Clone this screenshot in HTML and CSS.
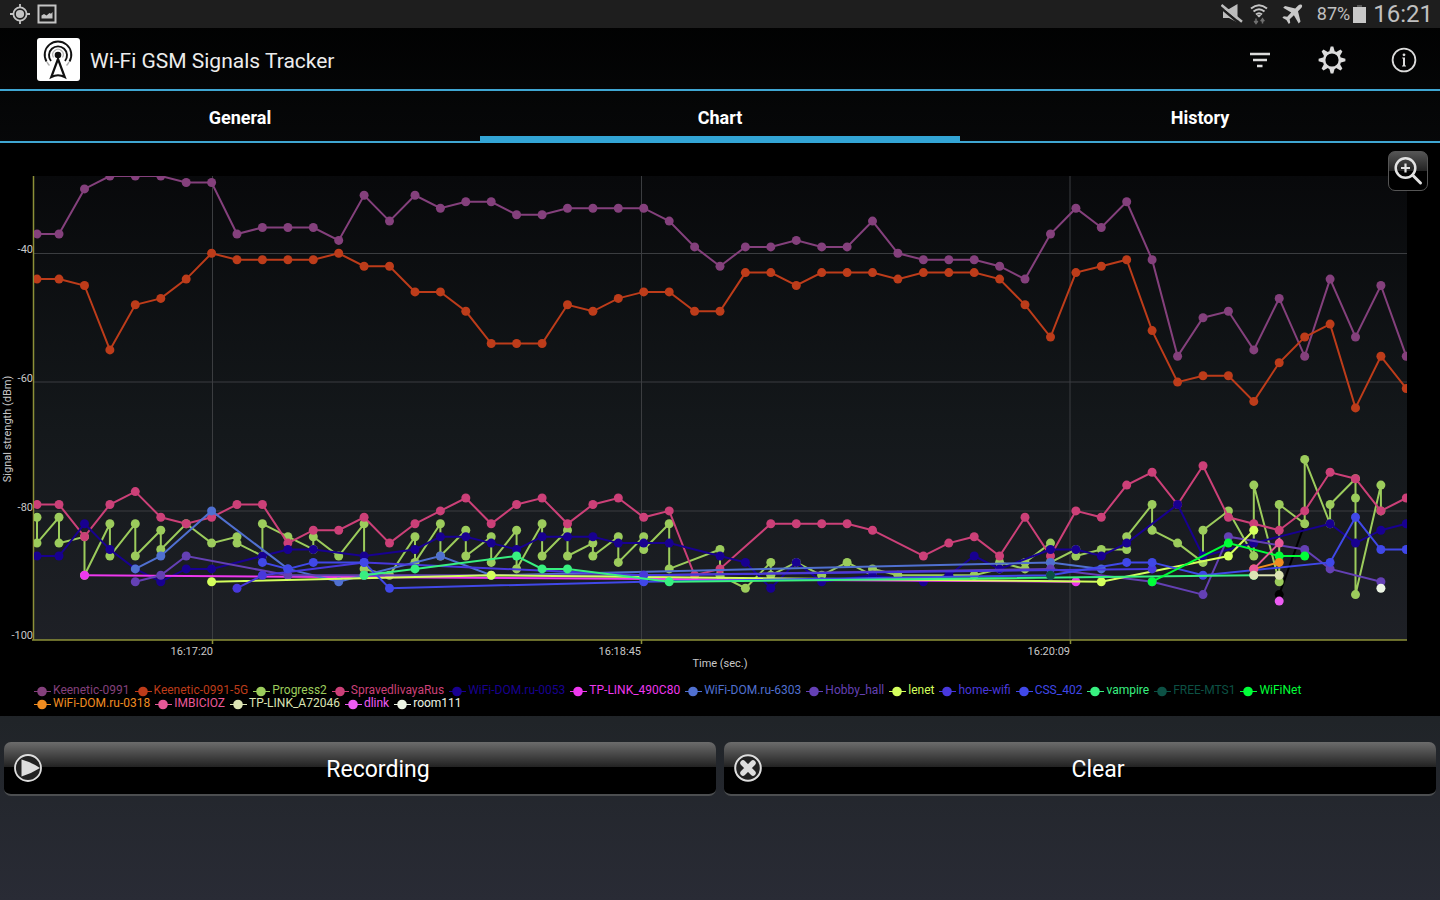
FILE: index.html
```html
<!DOCTYPE html>
<html lang="en">
<head>
<meta charset="utf-8">
<meta name="viewport" content="width=device-width, initial-scale=1">
<title>Wi-Fi GSM Signals Tracker</title>
<link rel="stylesheet" href="styles.css">
</head>
<body>
<div class="status">
  <div class="status-group">
    <svg class="ic" width="20" height="20" viewBox="0 0 20 20" fill="none" stroke="#c4c4c4" stroke-width="1.8"><circle cx="10" cy="10" r="6.6"/><circle cx="10" cy="10" r="3.2" fill="#c4c4c4"/><path d="M10 0v4M10 16v4M0 10h4M16 10h4"/></svg>
    <svg class="ic" width="20" height="20" viewBox="0 0 20 20"><path d="M1.500 1.500h17v17h-17z" fill="none" stroke="#c4c4c4" stroke-width="2"/><path d="M4.500 14.500v-3l2.500-1.500 2.500 1.500 3-2.500 1.500.8 1.500-1.800v6.500z" fill="#c4c4c4"/></svg>
  </div>
  <div class="status-group status-right">
    <svg class="ic mute" width="22" height="20" viewBox="0 0 22 20"><path d="M2 5h6l8.500-5v18.500L8 14H2z" fill="#bdbdbd"/><path d="M-1 3 20 20.500" stroke="#1e1e1e" stroke-width="2.600"/><path d="M.5 1 21 17.800" stroke="#bdbdbd" stroke-width="2.400"/></svg>
    <svg class="ic wifi" width="18" height="21" viewBox="0 0 18 21"><g fill="none" stroke="#c4c4c4" stroke-width="2"><path d="M1 4.500q8-6.500 16 0M3.500 7.600q5.500-4.600 11 0M6 10.500q3-2.500 6 0"/></g><path d="M9 13.500 6.800 11.600q2.200-1.600 4.400 0z" fill="#c4c4c4"/><path d="M6 14.500v4.500M4.200 17 6 19.400 7.800 17M12.500 19.500V15M10.700 17.200l1.800-2.400 1.800 2.400" fill="none" stroke="#707070" stroke-width="1.500"/></svg>
    <svg class="ic plane" width="21" height="21" viewBox="0 0 21 21"><path d="M19.800 1c-1-1-2.600-.4-3.600.6l-3 3L3 2 1.200 3.800l8 4.800-4 4.200-3.400-.5L.4 13.700l4 2.400 2.400 4 1.400-1.400-.5-3.500 4.200-4 4.800 8.200 1.800-1.800-2.500-10.400 3-3c1-1 1.600-2.400.8-3.200z" fill="#c8c8c8"/></svg>
    <span class="percent">87%</span>
    <svg class="ic" width="13" height="18" viewBox="0 0 13 18"><path d="M4 0h5v2h4v16H0V2h4z" fill="#c8c8c8"/><path d="M4 0h5v2H4z" fill="#555"/></svg>
    <time class="clock">16:21</time>
  </div>
</div>

<header class="appbar">
  <svg class="logo" width="43" height="43" viewBox="0 0 43 43"><rect width="43" height="43" rx="3" fill="#fff"/><g fill="none" stroke="#111"><circle cx="21" cy="17" r="3.300" fill="#111" stroke="none"/><path stroke-width="1.500" d="M12.500 27.500A13 13 0 0 1 10 24M29.500 27.500A13 13 0 0 0 32 24" opacity=".35"/><path stroke-width="1.900" d="M9.500 23.500A13.300 13.300 0 1 1 32.500 23.500"/><path stroke-width="1.900" d="M14 23A9 9 0 1 1 28 23"/><path stroke-width="1.300" d="M16.500 19.500A5.300 5.300 0 1 1 25.500 19.500" opacity=".3"/><path stroke-width="2.200" d="M21 21 14.300 39q6.700-3.500 13.400 0z"/></g></svg>
  <h1 class="title">Wi-Fi GSM Signals Tracker</h1>
  <div class="actions">
    <button class="action" type="button" aria-label="Filter"><svg width="22" height="16" viewBox="0 0 22 16"><path d="M1 2h20M4 8h14M8 14h5.500" stroke="#dcdcdc" stroke-width="2.500"/></svg></button>
    <button class="action" type="button" aria-label="Settings"><svg width="28" height="28" viewBox="-14 -14 28 28"><circle r="7.900" fill="none" stroke="#dcdcdc" stroke-width="2.600"/><g fill="#dcdcdc"><path id="tooth" d="M-2.800-8.200-1.300-13.400h2.600L2.800-8.200z"/><use href="#tooth" transform="rotate(45)"/><use href="#tooth" transform="rotate(90)"/><use href="#tooth" transform="rotate(135)"/><use href="#tooth" transform="rotate(180)"/><use href="#tooth" transform="rotate(225)"/><use href="#tooth" transform="rotate(270)"/><use href="#tooth" transform="rotate(315)"/></g></svg></button>
    <button class="action" type="button" aria-label="Information"><svg width="26" height="26" viewBox="0 0 26 26"><circle cx="13" cy="13" r="11.400" fill="none" stroke="#dcdcdc" stroke-width="1.800"/><path d="M11.200 10.500H14v8h1v1h-4v-1h1v-7h-.8z" fill="#dcdcdc"/><circle cx="13" cy="7.800" r="1.400" fill="#dcdcdc"/></svg></button>
  </div>
</header>

<nav class="tabs">
  <button class="tab" type="button">General</button>
  <button class="tab tab-active" type="button" aria-current="page">Chart</button>
  <button class="tab" type="button">History</button>
</nav>

<main>
  <section class="chart-panel">
    <svg class="chart" id="chart" viewBox="0 143 1440 541" role="img" aria-label="Signal strength over time"></svg>
    <ul class="legend" id="legend"></ul>
    <button class="zoom" type="button" aria-label="Zoom in"><svg width="30" height="30" viewBox="0 0 30 30" fill="none" stroke="#e2e2e2"><circle cx="12.500" cy="12" r="9.800" stroke-width="2.500"/><path d="M12.500 7.500v9M8 12h9" stroke-width="2.200"/><path d="m19.500 19 8 8" stroke-width="3" stroke-linecap="round"/></svg></button>
  </section>
  <div class="buttons">
    <button class="glossy" type="button"><svg class="glossy-icon" width="28" height="28" viewBox="0 0 28 28"><circle cx="14" cy="14" r="13" fill="#222" stroke="#dedede" stroke-width="1.800"/><path d="M7.500 5.500v17q10-3 18.500-8.500Q18 8.500 7.500 5.500z" fill="#dedede"/></svg>Recording</button>
    <button class="glossy" type="button"><svg class="glossy-icon" width="28" height="28" viewBox="0 0 28 28"><circle cx="14" cy="14" r="12.800" fill="#222" stroke="#dedede" stroke-width="2"/><path d="m9 9 10 10M19 9 9 19" stroke="#dedede" stroke-width="5.500" stroke-linecap="round"/></svg>Clear</button>
  </div>
</main>
<script src="chart.js"></script>
</body>
</html>
```

FILE: styles.css
```css
* { box-sizing: border-box; }

body {
  margin: 0;
  min-height: 100vh;
  background: linear-gradient(#000, #14181b 48%, #202428 80%, #292b35);
  color: #fff;
  font-family: Roboto, sans-serif;
}

button {
  margin: 0;
  padding: 0;
  border: 0;
  background: none;
  color: inherit;
  font: inherit;
}

svg { display: block; }

.status {
  display: flex;
  justify-content: space-between;
  align-items: center;
  height: 28px;
  padding: 0 7px 0 10px;
  background: #1e1e1e;
  color: #c0c0c0;
}

.status-group {
  display: flex;
  align-items: center;
  gap: 7px;
}

.status-right { gap: 0; }
.ic { flex: none; overflow: hidden; }
.mute { margin-right: 7px; }
.wifi { margin-right: 14px; }
.plane { margin-right: 14px; }
.percent { margin-right: 3px; font-size: 18px; line-height: 28px; }
.clock { margin-left: 7px; font-size: 24px; line-height: 28px; }

.appbar {
  display: flex;
  align-items: center;
  height: 63px;
  padding: 2px 0 0 37px;
  border-bottom: 2px solid #3fa6d2;
}

.title {
  flex: 1;
  margin: 0 0 0 10px;
  padding-top: 2px;
  color: #ececec;
  font-size: 21px;
  font-weight: 400;
  line-height: 28px;
}

.actions { display: flex; }

.action {
  display: grid;
  place-items: center;
  width: 72px;
  height: 60px;
}

.tabs {
  display: grid;
  grid-template-columns: repeat(3, 1fr);
}

.tab {
  height: 52px;
  padding-top: 2px;
  border-bottom: 2px solid #3fa6d2;
  font-size: 18px;
  font-weight: 700;
}

.tab-active {
  padding-top: 7px;
  border-bottom: 7px solid #33a5d6;
}

.chart-panel {
  position: relative;
  padding-bottom: 6px;
  background: #000;
}

.chart {
  width: 100%;
  height: auto;
}

.axis-text { fill: #c8c8c8; font-size: 11px; }

.legend {
  display: flex;
  flex-wrap: wrap;
  column-gap: 5px;
  margin: 0;
  padding: 0 34px;
  list-style: none;
  font-size: 12px;
  line-height: 13px;
}

.legend li { display: flex; align-items: center; gap: 2px; }

.zoom {
  position: absolute;
  top: 8px;
  right: 12px;
  display: grid;
  place-items: center;
  width: 40px;
  height: 40px;
  border: 1px solid #555;
  border-radius: 7px;
  background: linear-gradient(#555, #222 50%, #000 50%);
}

.buttons {
  display: grid;
  grid-template-columns: 1fr 1fr;
  gap: 8px;
  padding: 26px 4px;
}

.glossy {
  position: relative;
  height: 54px;
  padding: 2px 0 0 36px;
  border-bottom: 2px solid #4c4e50;
  border-radius: 7px;
  background: linear-gradient(#6c6c6c, #222 48%, #000 48%);
  font-size: 23px;
}

.glossy-icon {
  position: absolute;
  left: 10px;
  top: 12px;
}
```

FILE: chart.js
```javascript
// Each point is [sample index, signal strength below zero in dBm].
const seq = (values) => values.map((v, i) => [i, v]);

const series = [
  { name: 'Keenetic-0991', color: '#84407c', points: seq([37,37,30,28,28,28,29,29,37,36,36,36,38,31,35,31,33,32,32,34,34,33,33,33,33,35,39,42,39,39,38,39,39,35,40,41,41,41,42,44,37,33,36,32,41,56,50,49,55,47,56,44,53,45,56]) },
  { name: 'Keenetic-0991-5G', color: '#bd3c1a', points: seq([44,44,45,55,48,47,44,40,41,41,41,41,40,42,42,46,46,49,54,54,54,48,49,47,46,46,49,49,43,43,45,43,43,43,44,43,43,43,44,48,53,43,42,41,52,60,59,59,63,57,53,51,64,56,61]) },
  { color: '#000000', hidden: true, points: [[49,93],[50,82]] },
  { name: 'Progress2', color: '#9ccc5c', points: [[0,81],[0,85],[1,81],[1,85],[2,84],[2,90],[3,82],[3,87],[4,82],[4,87],[5,83],[5,86],[6,82],[7,85],[8,84],[8,85],[9,87],[9,82],[10,84],[11,86],[11,84],[12,87],[13,82],[13,89],[14,90],[15,84],[15,88],[16,82],[16,87],[17,83],[17,87],[18,84],[18,88],[19,83],[19,89],[20,82],[20,87],[21,83],[21,87],[22,85],[22,87],[23,84],[23,88],[24,84],[24,86],[25,82],[25,89],[27,86],[27,90],[28,92],[29,88],[29,90],[30,88],[31,90],[32,88],[33,90],[33,89],[34,90],[37,90],[38,89],[38,88],[39,89],[39,88],[40,85],[40,88],[41,86],[41,87],[42,86],[43,86],[43,84],[44,79],[44,83],[45,85],[46,88],[46,83],[47,80],[48,87],[48,76],[49,91],[49,79],[50,82],[50,72],[51,82],[51,79],[52,75],[52,78],[52,93],[53,76],[53,80]] },
  { name: 'SpravedlivayaRus', color: '#cc4078', points: [[0,79],[1,79],[2,84],[3,79],[4,77],[5,81],[6,82],[7,81],[8,79],[9,79],[10,85],[11,83],[12,83],[13,81],[14,85],[15,82],[16,80],[17,78],[18,82],[19,79],[20,78],[21,82],[22,79],[23,78],[24,81],[25,80],[26,90],[27,89],[29,82],[30,82],[31,82],[32,82],[33,83],[35,87],[36,85],[37,84],[38,87],[39,81],[40,87],[41,80],[42,81],[43,76],[44,74],[45,79],[46,73],[47,81],[48,82],[49,83],[50,80],[51,74],[52,75],[53,80],[54,78]] },
  { name: 'WiFi-DOM.ru-0053', color: '#180090', points: [[0,87],[1,87],[2,82],[3,86],[4,89],[5,91],[6,89],[7,89],[9,87],[10,86],[11,86],[13,87],[15,86],[16,84],[17,84],[18,85],[19,86],[20,84],[21,84],[22,84],[23,85],[24,85],[25,85],[27,87],[28,88],[29,92],[30,88],[31,91],[33,90],[35,91],[36,90],[37,87],[38,89],[40,86],[41,86],[42,87],[43,85],[45,79],[46,87],[48,85],[51,82],[52,85],[53,83],[54,82]] },
  { name: 'TP-LINK_490C80', color: '#ee38ee', points: [[2,90],[41,91]] },
  { name: 'WiFi-DOM.ru-6303', color: '#5070d0', points: [[4,89],[5,87],[7,80],[10,89],[12,91],[13,90],[16,87],[18,90],[40,88],[42,89]] },
  { name: 'Hobby_hall', color: '#6440b4', points: [[4,91],[5,90],[6,87],[10,90],[24,90],[40,89],[44,91],[46,93],[47,84],[50,86],[51,89],[53,91]] },
  { name: 'lenet', color: '#d4ff5c', points: [[7,91],[18,90],[42,91],[47,87],[48,83]] },
  { name: 'home-wifi', color: '#4838dc', points: [[8,92],[9,90],[13,88],[24,90],[44,89]] },
  { name: 'CSS_402', color: '#4048e8', points: [[9,88],[10,89],[11,88],[13,88],[14,92],[24,91],[40,90],[43,88],[44,88],[46,90],[51,88],[52,81],[53,86],[54,86]] },
  { name: 'vampire', color: '#38f080', points: [[13,90],[15,89],[19,87],[20,89],[21,89],[25,91],[48,90]] },
  { name: 'FREE-MTS1', color: '#0c5044', points: [[40,90]] },
  { name: 'WiFiNet', color: '#00ff38', points: [[44,91],[47,85],[49,87],[50,87]] },
  { name: 'WiFi-DOM.ru-0318', color: '#f08c20', points: [[48,89],[49,88]] },
  { name: 'IMBICIOZ', color: '#e85898', points: [[48,89],[49,85]] },
  { name: 'TP-LINK_A72046', color: '#dce4b4', points: [[48,90],[49,90]] },
  { name: 'dlink', color: '#ee5cf4', points: [[49,94]] },
  { name: 'room111', color: '#ecf4e4', points: [[53,92]] }
];

const x = (i) => (i === 0 ? 37 : i === 1 ? 59 : 84.5 + (i - 2) * 25.42).toFixed(1);
const y = (v) => (253.3 + (v - 40) * 6.44).toFixed(1);

let svg = `
  <defs>
    <linearGradient id="plot-bg" x2="0" y2="1"><stop stop-color="#08090b"/><stop offset=".55" stop-color="#14181b"/><stop offset="1" stop-color="#1e2026"/></linearGradient>
    <clipPath id="plot-clip"><rect x="34" y="176" width="1373" height="464"/></clipPath>
  </defs>
  <rect x="34" y="176" width="1373" height="464" fill="url(#plot-bg)"/>
  <path d="M34 253.500H1407M34 382H1407M34 511H1407M212.500 176V640M641.500 176V640M1070 176V640" stroke="#3b3d40" fill="none"/>
  <path d="M33.500 176V640.500M32 640H1407M212.500 640v4M641.500 640v4M1070.500 640v4" stroke="#8c9038" stroke-width="1.500" fill="none"/>
  <g class="axis-text" text-anchor="end">
    <text x="33" y="253">-40</text><text x="33" y="382">-60</text><text x="33" y="511">-80</text><text x="33" y="639">-100</text>
    <text x="213" y="655">16:17:20</text><text x="641" y="655">16:18:45</text><text x="1070" y="655">16:20:09</text>
  </g>
  <g class="axis-text" text-anchor="middle">
    <text x="720" y="667">Time (sec.)</text>
    <text transform="translate(11 429) rotate(-90)">Signal strength (dBm)</text>
  </g>
  <g clip-path="url(#plot-clip)">`;

for (const s of series) {
  const line = s.points.map(([i, v]) => `${x(i)},${y(v)}`).join(' ');
  svg += `<g fill="${s.color}"><polyline points="${line}" fill="none" stroke="${s.color}" stroke-width="2"/>`;
  for (const [i, v] of s.points) svg += `<circle cx="${x(i)}" cy="${y(v)}" r="4.5"/>`;
  svg += '</g>';
}
document.getElementById('chart').innerHTML = svg + '</g>';

document.getElementById('legend').innerHTML = series.filter((s) => !s.hidden).map((s) =>
  `<li style="color:${s.color}"><svg width="17" height="12" viewBox="0 0 17 12" fill="currentColor"><path d="M0 6h17v1H0z"/><circle cx="8" cy="6.500" r="4.800"/></svg>${s.name}</li>`).join('');
```
